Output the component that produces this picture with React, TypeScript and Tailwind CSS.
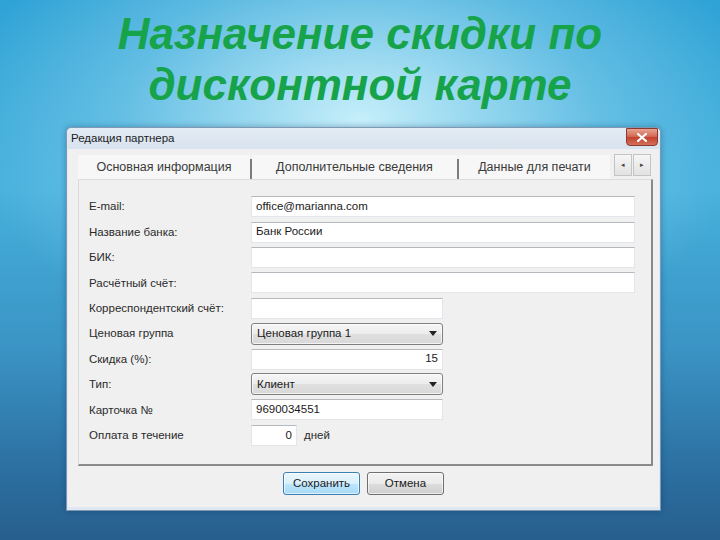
import React from "react";

const Label: React.FC<{ text: string }> = ({ text }) => (
  <div className="w-[162px] shrink-0 text-[11.5px] text-[#2a2a2a] leading-none pt-[1px]">{text}</div>
);

const TextBox: React.FC<{ value?: string; width: string; right?: boolean }> = ({ value, width, right }) => (
  <div
    className={`${width} h-[21px] bg-white border border-[#e2e6ea] border-t-[#b5b8bd] flex items-center px-[4px] text-[11.5px] text-[#1a1a1a] ${
      right ? "justify-end" : ""
    }`}
  >
    {value}
  </div>
);

const Combo: React.FC<{ value: string }> = ({ value }) => (
  <div className="w-[192px] h-[22px] rounded-[3px] border border-[#808080] bg-[linear-gradient(#f6f6f6,#ececec_50%,#e0e0e0_51%,#d8d8d8)] flex items-center justify-between pl-[5px] pr-[5px] text-[11.5px] text-[#1a1a1a] shadow-[inset_0_0_0_1px_rgba(255,255,255,0.7)]">
    <span>{value}</span>
    <svg width="8" height="5" viewBox="0 0 8 5">
      <path d="M0 0 H8 L4 5 Z" fill="#222" />
    </svg>
  </div>
);

const Row: React.FC<{ label: string; children: React.ReactNode }> = ({ label, children }) => (
  <div className="flex items-center h-[25.4px]">
    <Label text={label} />
    {children}
  </div>
);

const Tab: React.FC<{ text: string; width: string }> = ({ text, width }) => (
  <div className={`${width} h-[24px] self-end flex items-center justify-center bg-[#f7f7f7] text-[12.5px] text-[#3a3a3a]`}>
    {text}
  </div>
);

const Sep = () => <div className="w-[2px] h-[20px] self-end bg-[#7c7c7c]" />;

export default function App() {
  return (
    <div className="w-[720px] h-[540px] overflow-hidden flex flex-col font-['Liberation_Sans',Arial,sans-serif] bg-[radial-gradient(ellipse_55%_45%_at_50%_22%,rgba(205,242,252,0.95),rgba(150,215,240,0.45)_60%,transparent_100%),linear-gradient(180deg,#2fa3d6_0%,#45b0dc_35%,#3a93c4_65%,#2b6e9f_88%,#275f8e_100%)]">
      <div className="h-[127px] shrink-0 flex flex-col items-center pt-[8px] text-[44px] leading-[51px] font-bold italic text-[#16a34a]">
        <div>Назначение скидки по</div>
        <div>дисконтной карте</div>
      </div>

      <div className="ml-[66px] w-[595px] h-[384px] border border-[#7f98b3] rounded-t-[5px] bg-[#dfe8f2] flex flex-col shadow-[0_0_6px_rgba(0,40,80,0.35)]">
        <div className="h-[21px] shrink-0 flex items-center justify-between pl-[4px] bg-[linear-gradient(#e3ebf4,#d8e3ef)] rounded-t-[5px]">
          <span className="text-[11.5px] text-[#1c1c1c]">Редакция партнера</span>
          <div className="w-[32px] h-[18px] mr-[2px] self-start rounded-b-[4px] border border-[#8a3a2e] bg-[linear-gradient(#e9a391,#d06450_50%,#c2412b_51%,#d4705a)] flex items-center justify-center">
            <svg width="10" height="9" viewBox="0 0 10 9">
              <path d="M1 1 L9 8 M9 1 L1 8" stroke="#fff" strokeWidth="2.2" strokeLinecap="square" />
            </svg>
          </div>
        </div>

        <div className="flex-1 bg-[#f0f0f0] mx-[1px] mb-[3px] flex flex-col pl-[10px] pr-[6px] pt-[4px]">
          <div className="h-[26px] flex items-end">
            <div className="flex items-end w-[535px]">
              <Tab text="Основная информация" width="w-[172px]" />
              <Sep />
              <Tab text="Дополнительные сведения" width="w-[205px]" />
              <Sep />
              <Tab text="Данные для печати" width="w-[151px]" />
            </div>
            <div className="flex h-[23px] self-start mt-[1px] ml-[1px] gap-[1px]">
              {["◂", "▸"].map((a) => (
                <div
                  key={a}
                  className="w-[18px] h-[22px] border border-[#c4c4c4] bg-[linear-gradient(#f6f6f6,#e2e2e2)] flex items-center justify-center text-[7px] text-[#444]"
                >
                  {a}
                </div>
              ))}
            </div>
          </div>

          <div className="h-[287px] border border-[#dcdcdc] border-r-[2px] border-r-[#8a8a8a] border-b-[2px] border-b-[#8a8a8a] pl-[10px] pt-[14px]">
            <Row label="E-mail:">
              <TextBox value="office@marianna.com" width="w-[384px]" />
            </Row>
            <Row label="Название банка:">
              <TextBox value="Банк России" width="w-[384px]" />
            </Row>
            <Row label="БИК:">
              <TextBox width="w-[384px]" />
            </Row>
            <Row label="Расчётный счёт:">
              <TextBox width="w-[384px]" />
            </Row>
            <Row label="Корреспондентский счёт:">
              <TextBox width="w-[192px]" />
            </Row>
            <Row label="Ценовая группа">
              <Combo value="Ценовая группа 1" />
            </Row>
            <Row label="Скидка (%):">
              <TextBox value="15" width="w-[192px]" right />
            </Row>
            <Row label="Тип:">
              <Combo value="Клиент" />
            </Row>
            <Row label="Карточка №">
              <TextBox value="9690034551" width="w-[192px]" />
            </Row>
            <Row label="Оплата в течение">
              <TextBox value="0" width="w-[46px]" right />
              <span className="ml-[7px] text-[11.5px] text-[#2a2a2a]">дней</span>
            </Row>
          </div>

          <div className="flex justify-center gap-[7px] mt-[6px] pr-[4px]">
            <button className="w-[77px] h-[23px] rounded-[3px] border border-[#3c7fb1] bg-[linear-gradient(#eaf6fd,#d9f0fc_50%,#bee6fd_51%,#a7d9f5)] text-[11.5px] text-[#1a1a1a] shadow-[inset_0_0_0_1px_rgba(255,255,255,0.6)]">
              Сохранить
            </button>
            <button className="w-[77px] h-[23px] rounded-[3px] border border-[#707070] bg-[linear-gradient(#f2f2f2,#ebebeb_50%,#dddddd_51%,#cfcfcf)] text-[11.5px] text-[#1a1a1a] shadow-[inset_0_0_0_1px_rgba(255,255,255,0.6)]">
              Отмена
            </button>
          </div>
        </div>
      </div>
    </div>
  );
}
